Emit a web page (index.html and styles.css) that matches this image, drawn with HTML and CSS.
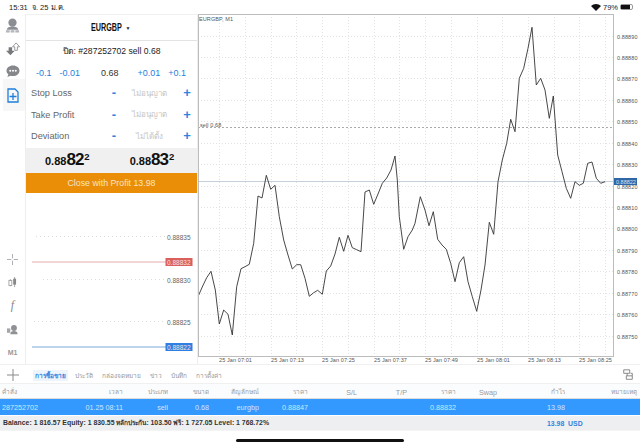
FILE: index.html
```html
<!DOCTYPE html>
<html lang="th">
<head>
<meta charset="utf-8">
<title>EURGBP M1</title>
<link rel="stylesheet" href="styles.css">
</head>
<body>
<div class="screen">
  <header class="status">
    <span>15:31&nbsp; จ. 25 ม.ค.</span>
    <span class="status-right">
      <svg class="wifi" width="10" height="8" viewBox="0 0 10 8"><path d="M5 8 0 3a7 7 0 0 1 10 0z" fill="#111"/></svg>
      <span>79%</span>
      <span class="battery"><span class="battery-fill"></span></span>
    </span>
  </header>

  <main class="main">
    <nav class="rail">
      <div class="rail-top">
        <div class="rail-cell"><svg width="15" height="15" viewBox="0 0 16 16"><circle cx="8" cy="5" r="4.400" fill="#8b8e92"/><path d="M2 12.500c0-2.600 3-3.500 6-3.500s6 .9 6 3.500z" fill="#8b8e92"/><rect x="1" y="13" width="4" height="2.500" fill="#b4b6ba"/><rect x="6" y="13" width="4" height="2.500" fill="#b4b6ba"/><rect x="11" y="13" width="4" height="2.500" fill="#b4b6ba"/></svg></div>
        <div class="rail-cell"><svg width="14" height="14" viewBox="0 0 16 16"><path d="M3 6h4v4h3l-5 5-5-5h3z" fill="#77797c"/><path d="M11.500 1l4 4.500h-2.500v4h-3v-4H7.500z" fill="#fff" stroke="#8b8e92"/></svg></div>
        <div class="rail-cell"><svg width="14" height="13" viewBox="0 0 15 14"><path d="M7.500 0.500c4 0 7 2.500 7 5.700s-3 5.700-7 5.700c-1 0-2-.2-2.800-.4L1.500 13l1-3C1.200 9 .5 7.700.5 6.200.5 3 3.500.5 7.500.5z" fill="#85878a"/><circle cx="4.500" cy="6.200" r="1.100" fill="#fff"/><circle cx="7.500" cy="6.200" r="1.100" fill="#fff"/><circle cx="10.500" cy="6.200" r="1.100" fill="#fff"/></svg></div>
        <div class="rail-cell rail-active"><svg width="12" height="15" viewBox="0 0 12 15"><path d="M1 1h7l3 3v10H1z" fill="none" stroke="#1f7fdc" stroke-width="1.300"/><path d="M6 5v7M2.500 8.500h7" stroke="#1f7fdc" stroke-width="1.300"/></svg></div>
      </div>
      <div class="rail-bottom">
        <div class="rail-cell"><svg width="11" height="11" viewBox="0 0 14 14"><path d="M7 0v5.500M7 8.500V14M0 7h5.500M8.500 7H14" stroke="#a9abae" stroke-width="1.200"/></svg></div>
        <div class="rail-cell"><svg width="9" height="11" viewBox="0 0 10 13"><path d="M2.500 2.500v8.500M7.500 0v12" stroke="#999"/><rect x=".8" y="4" width="3.400" height="6" fill="#fff" stroke="#999"/><rect x="5.800" y="2" width="3.400" height="7" fill="#888"/></svg></div>
        <div class="rail-cell rail-f">f</div>
        <div class="rail-cell"><svg width="11" height="11" viewBox="0 0 15 13"><circle cx="9.500" cy="4.500" r="4" fill="#8f9194"/><path d="M4.500 13c0-3 2-4.500 5-4.500s5 1.500 5 4.500z" fill="#8f9194"/><rect y="5" width="4.500" height="6" fill="#a4a6a9"/></svg></div>
        <div class="rail-cell rail-m1">M1</div>
      </div>
    </nav>

    <section class="panel">
      <div class="symbol"><span class="symbol-name">EURGBP</span><span class="symbol-caret">▼</span></div>
      <div class="close-title">ปิด: #287252702 sell 0.68</div>
      <div class="volume">
        <span class="vol-group"><span>-0.1</span><span>-0.01</span></span>
        <span class="vol-value">0.68</span>
        <span class="vol-group"><span>+0.01</span><span>+0.1</span></span>
      </div>
      <div class="param"><span class="param-name">Stop Loss</span><span class="step">-</span><span class="param-value">ไม่อนุญาต</span><span class="step">+</span></div>
      <div class="param"><span class="param-name">Take Profit</span><span class="step">-</span><span class="param-value">ไม่อนุญาต</span><span class="step">+</span></div>
      <div class="param"><span class="param-name">Deviation</span><span class="step">-</span><span class="param-value">ไม่ได้ตั้ง</span><span class="step">+</span></div>
      <div class="prices">
        <span class="price">0.88<b>82</b><sup>2</sup></span>
        <span class="price">0.88<b>83</b><sup>2</sup></span>
      </div>
      <button class="close-btn">Close with Profit 13.98</button>
      <svg class="mini" width="172" height="171" viewBox="25 193 172 171">
        <g class="mini-grid">
          <line x1="35" x2="164" y1="236.500" y2="236.500"/>
          <line x1="42" x2="164" y1="279.500" y2="279.500"/>
          <line x1="33" x2="164" y1="321.500" y2="321.500"/>
        </g>
        <line x1="31" x2="165" y1="262" y2="262" class="mini-red"/>
        <line x1="31" x2="165" y1="347" y2="347" class="mini-blue"/>
        <rect x="164.500" y="258" width="27" height="8" fill="#d9605c"/>
        <rect x="164.500" y="343" width="27" height="8" fill="#2f7fe0"/>
        <g class="mini-label">
          <text x="166" y="239.500">0.88835</text>
          <text x="166" y="282.500">0.88830</text>
          <text x="166" y="324.500">0.88825</text>
          <text x="166" y="264.500" class="on-color">0.88832</text>
          <text x="166" y="349.500" class="on-color">0.88822</text>
        </g>
      </svg>
    </section>

    <section class="chart">
      <svg id="chart" width="442" height="350" viewBox="198 14 442 350"></svg>
    </section>
  </main>

  <div class="tabs">
    <svg class="tab-plus" width="12" height="12" viewBox="0 0 12 12"><path d="M6 0v12M0 6h12" stroke="#8a8a8a" stroke-width="1"/></svg>
    <span class="tab tab-active">การซื้อขาย</span>
    <span class="tab">ประวัติ</span>
    <span class="tab">กล่องจดหมาย</span>
    <span class="tab">ข่าว</span>
    <span class="tab">บันทึก</span>
    <span class="tab">การตั้งค่า</span>
    <svg class="tab-layout" width="12" height="12" viewBox="0 0 12 14"><path d="M1 1h7v4H1zM4 8h7v4H4z" fill="none" stroke="#777"/><path d="M5 5v3M9 5h2v3" fill="none" stroke="#777"/></svg>
  </div>

  <div class="table">
    <div class="row head">
      <span class="th">คำสั่ง</span><span class="th">เวลา</span><span class="th">ประเภท</span><span class="th">ขนาด</span><span class="th">สัญลักษณ์</span><span class="th">ราคา</span><span>S/L</span><span>T/P</span><span class="th">ราคา</span><span>Swap</span><span class="th">กำไร</span><span class="th">หมายเหตุ</span>
    </div>
    <div class="row selected">
      <span>287252702</span><span>01.25 08:11</span><span>sell</span><span>0.68</span><span>eurgbp</span><span>0.88847</span><span></span><span></span><span>0.88832</span><span></span><span>13.98</span><span></span>
    </div>
    <div class="balance">
      <span>Balance: 1 816.57 Equity: 1 830.55 <span class="th">หลักประกัน:</span> 103.50 <span class="th">ฟรี:</span> 1 727.05 Level: 1 768.72%</span>
      <span class="balance-total">13.98&nbsp; USD</span>
    </div>
  </div>
  <div class="home"></div>
</div>
<script src="chart.js"></script>
</body>
</html>
```
FILE: styles.css
```css
* { box-sizing: border-box; }
html, body { margin: 0; padding: 0; background: #fff; }
body { font-family: "Liberation Sans", "Noto Sans", sans-serif; color: #222; }
.screen { position: relative; width: 640px; height: 447px; overflow: hidden; background: #fff; }

.status { height: 14px; display: flex; justify-content: space-between; align-items: center; padding: 0 7px 0 9px; font-size: 7.500px; color: #222; }
.status-right { display: flex; align-items: center; gap: 2px; }
.battery { width: 13px; height: 6px; border: 1px solid #999; border-radius: 2px; display: block; }
.battery-fill { display: block; width: 9px; height: 100%; background: #111; }

.main { height: 350px; display: flex; }

.rail { width: 26px; display: flex; flex-direction: column; justify-content: space-between; border-right: 1px solid #eee; }
.rail-top { display: grid; grid-auto-rows: 23px; }
.rail-bottom { display: grid; grid-auto-rows: 23.300px; }
.rail-cell { display: flex; justify-content: center; align-items: center; }
.rail-cell svg { display: block; }
.rail-active { height: 32px; margin: -4px 0 -5px 3px; background: #f7f7f7; padding-right: 3px; }
.rail-f { font: italic 12px "Liberation Serif", serif; color: #888; }
.rail-m1 { font-size: 7px; font-weight: bold; color: #999; }

.panel { width: 172px; display: flex; flex-direction: column; border-right: 1px solid #eee; border-top: 1px solid #f0f0f0; }
.symbol { height: 26px; display: flex; justify-content: center; align-items: center; gap: 4px; border-bottom: 1px solid #e3e3e3; padding-right: 2px; }
.symbol-name { font-size: 10px; font-weight: bold; color: #111; transform: scaleX(.72); margin: 0 -6px; }
.symbol-caret { font-size: 5px; color: #222; }
.close-title { height: 21px; text-align: center; line-height: 21px; font-size: 8.600px; color: #222; }
.volume { height: 21px; display: flex; justify-content: space-between; align-items: center; padding: 0 11px 0 10px; font-size: 9px; color: #1f7fdc; }
.vol-group { display: flex; gap: 8px; }
.vol-value { color: #333; margin-left: 2px; }
.param { height: 21.500px; display: grid; grid-template-columns: 77px 12px 61px 12px; align-items: center; padding: 0 0 1px 5px; font-size: 9.200px; color: #666; }
.param-value { text-align: center; color: #c4c4c4; font-size: 8px; padding-right: 3px; }
.step { color: #2f83dd; font-size: 13px; font-weight: bold; text-align: center; line-height: 12px; }
.prices { height: 25.500px; display: flex; gap: 40px; align-items: center; background: #f0f0f0; padding: 0 0 0 19px; }
.price { font-size: 11px; font-weight: bold; color: #111; white-space: nowrap; }
.price b { font-size: 17px; letter-spacing: -1px; }
.price sup { font-size: 9.500px; vertical-align: 5px; line-height: 0; margin-left: 1px; }
.close-btn { height: 20px; flex: none; border: 0; padding: 0; background: #ea8e08; color: #f7e3c0; font: 8.800px "Liberation Sans", sans-serif; }
.mini { display: block; flex: 1; }
.mini-grid line { stroke: #ddd; stroke-width: 1; stroke-dasharray: 1 3; }
.mini-red { stroke: #ecc9c7; stroke-width: 1.500; }
.mini-blue { stroke: #a8c4e6; stroke-width: 1.500; }
.mini-label { font-size: 6.500px; fill: #666; }
.mini-label .on-color { fill: #f8e2e2; }

.chart { flex: 1; }
.chart svg { display: block; }
.grid-line { stroke: #e3e3e3; stroke-width: 1; stroke-dasharray: 1 2; }
.frame { fill: none; stroke: #bcbcbc; stroke-width: 1; }
.chart-line { fill: none; stroke: #333; stroke-width: .9; stroke-linejoin: round; }
.price-line { stroke: #c6d0da; stroke-width: 1; }
.sell-line { stroke: #aaa; stroke-width: 1; stroke-dasharray: 2 2; }
.axis-text { font-size: 5.500px; fill: #555; letter-spacing: .1px; }
.axis-tag { fill: #2f66a8; }
.axis-tag-text { font-size: 5.500px; fill: #dbe7f5; }

.tabs { height: 20px; display: flex; align-items: center; padding: 2px 0 0 7px; border-top: 1px solid #f0f0f0; border-bottom: 1px solid #f0f0f0; font-size: 6.500px; color: #999; }
.tab-plus { display: block; margin-right: 14px; }
.tab { padding: 0 2px; line-height: 11px; margin-right: 5px; white-space: nowrap; }
.tab-active { background: #eef4fb; color: #2f83dd; font-weight: bold; }
.tab-layout { margin-left: auto; margin-right: 6px; }

.table { font-size: 7.200px; }
.row { height: 16px; display: grid; grid-template-columns: 58px 63px 45px 41px 50px 49px 49px 50px 49px 41px 68px 72px; align-items: center; padding: 0 3px 0 2px; }
.row span { text-align: right; white-space: nowrap; overflow: hidden; }
.row span:first-child { text-align: left; }
.head { height: 15px; padding-top: 2px; background: #fafcfe; color: #9a9a9a; border-bottom: 1px solid #dcdcdc; }
.th { font-size: 6.500px; }
.selected { background: #3399ff; color: #cfe6ff; }
.balance { height: 15px; margin-top: 1px; display: flex; align-items: center; padding-left: 3px; background: #eeeff1; color: #333; font-size: 6.900px; font-weight: bold; border-bottom: 1px solid #f4f4f4; }
.balance-total { position: absolute; left: 547px; color: #2f83dd; }

.home { position: absolute; left: 236px; top: 439px; width: 168px; height: 3px; border-radius: 2px; background: #111; }
```
FILE: chart.js
```js
var pts = [[198.3,296],[202.7,286],[206.7,277.7],[211,271.3],[215.3,290],[219.3,324],[223.7,310],[228,314.3],[232.3,335],[236.7,286.7],[241,268.7],[245,266.7],[249.3,264.3],[253.7,243.3],[258,196],[262,198],[266.3,175.3],[270.7,189.3],[275,185.3],[279.3,216.7],[283.7,240],[288,255],[292.3,269],[296.7,264.7],[300.7,264.7],[305,278.3],[309.3,296.3],[313.7,292.7],[317.7,290.3],[322.3,294.3],[326.3,271],[330.7,266],[335,254],[339.3,237.3],[343.7,251.3],[348,235.3],[352.3,247.7],[356.7,249.7],[361,251.7],[365,192],[369.3,190],[373.7,204.3],[378,194],[382.3,183.3],[386.7,178],[391,170],[395,156],[397.3,180],[399.3,216.7],[403.7,249.3],[408,236.7],[412.3,230],[415,223.3],[420.3,196.7],[425,210],[429,225.7],[433.3,211.7],[437.7,239.3],[442,245],[446.3,249.3],[450.7,263.3],[455,281.7],[459.3,262.7],[463.7,256.7],[468,281.7],[472.3,296.7],[476.7,311.3],[481,290],[485,265],[489.3,222.3],[493.7,234.3],[498,181.7],[502.3,160],[506.7,143.3],[510.7,119.3],[515,131.7],[519.3,78.3],[523.7,68.3],[528,48.3],[532,27.3],[536.3,85],[540.7,78.3],[545,90],[549.3,118.3],[553.3,96],[557.7,155],[562,171.7],[566.3,188.3],[570.7,198.3],[575,181.7],[579.3,185.3],[583.3,183.3],[587.7,163.3],[592,162],[596.3,178.3],[600.7,183.3],[605,181.7]];
var svg = document.getElementById('chart');
var NS = 'http://www.w3.org/2000/svg';
function el(name, attrs, text) {
  var e = document.createElementNS(NS, name);
  for (var k in attrs) e.setAttribute(k, attrs[k]);
  if (text) e.textContent = text;
  svg.appendChild(e);
  return e;
}
var prices = ['0.88890','0.88880','0.88870','0.88860','0.88850','0.88840','0.88830','0.88820','0.88810','0.88800','0.88790','0.88780','0.88770','0.88760','0.88750'];
prices.forEach(function (p, i) {
  var y = Math.round(35.6 + i * 21.43) + 0.5;
  el('line', {x1: 198, x2: 614, y1: y, y2: y, 'class': 'grid-line'});
  el('text', {x: 617, y: y + 2, 'class': 'axis-text'}, p);
});
var times = ['25 Jan 07:01','25 Jan 07:13','25 Jan 07:25','25 Jan 07:37','25 Jan 07:49','25 Jan 08:01','25 Jan 08:13','25 Jan 08:25'];
for (var i = 0; i < 16; i++) {
  var x = Math.round(219.3 + i * 25.72) + 0.5;
  el('line', {x1: x, x2: x, y1: 14, y2: 356, 'class': 'grid-line'});
  if (i % 2 === 0) el('text', {x: x - 0.5, y: 362, 'class': 'axis-text'}, times[i / 2]);
}
el('line', {x1: 198, x2: 614, y1: 181.5, y2: 181.5, 'class': 'price-line'});
el('line', {x1: 198, x2: 614, y1: 127.5, y2: 127.5, 'class': 'sell-line'});
el('polyline', {points: pts.map(function (p) { return p.join(','); }).join(' '), 'class': 'chart-line'});
el('rect', {x: 198.5, y: 14.5, width: 415, height: 342, 'class': 'frame'});
el('text', {x: 199, y: 20.500, 'class': 'axis-text'}, 'EURGBP, M1');
el('text', {x: 200, y: 127, 'class': 'axis-text'}, 'sell 0.68');
el('rect', {x: 614, y: 178, width: 23, height: 7, 'class': 'axis-tag'});
el('text', {x: 616, y: 183.500, 'class': 'axis-tag-text'}, '0.88822');
```
